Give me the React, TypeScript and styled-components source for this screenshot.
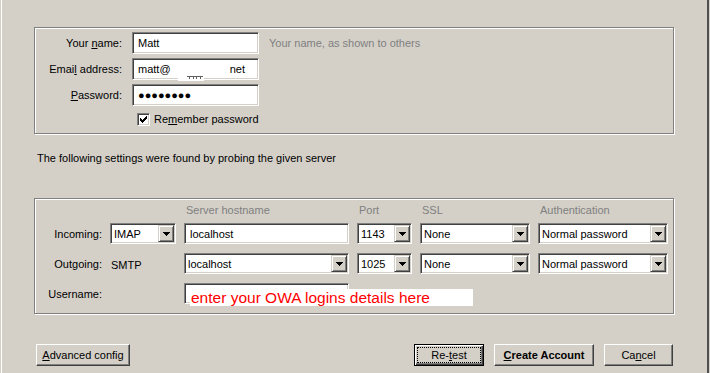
import React from "react";
import styled, { createGlobalStyle, css } from "styled-components";

const GlobalStyle = createGlobalStyle`
  html, body { margin: 0; padding: 0; background: #d4d0c8; }
  body {
    font-family: "Liberation Sans", Arial, sans-serif;
    font-size: 11px;
    color: #000;
  }
  *, *::before, *::after { box-sizing: border-box; }
`;

const Dialog = styled.div`
  position: relative;
  width: 710px;
  height: 373px;
  overflow: hidden;
  display: flex;
  flex-direction: column;
  align-items: flex-start;
  padding: 27px 0 0 34px;
  background: #d4d0c8;
  box-shadow: inset 1px 0 #d4d0c8, inset 2px 0 #fff, inset -1px 0 #d4d0c8,
    inset -3px 0 #505050;
`;

const GroupBox = styled.div<{ $height: number }>`
  position: relative;
  flex: none;
  width: 640px;
  height: ${(p) => p.$height}px;
  border: 1px solid #808080;
  box-shadow: inset 1px 1px 0 #fff, 1px 1px 0 #fff;
`;

const IdentityGrid = styled.div`
  display: grid;
  grid-template-columns: 87px 127px 1fr;
  grid-template-rows: 22px 22px 22px 18px;
  column-gap: 10px;
  row-gap: 4px;
  align-items: center;
  padding-top: 4px;
`;

const FieldLabel = styled.label`
  justify-self: end;
  white-space: nowrap;
`;

const Hint = styled.span`
  color: #808080;
  white-space: nowrap;
`;

const TextBox = styled.div<{ $width?: number }>`
  position: relative;
  display: flex;
  align-items: center;
  width: ${(p) => (p.$width ? `${p.$width}px` : "100%")};
  height: 100%;
  padding: 0 4px 0 5px;
  background: #fff;
  border: 1px solid;
  border-color: #808080 #fff #fff #808080;
  box-shadow: inset 1px 1px 0 #404040, inset -1px -1px 0 #d4d0c8;
  white-space: nowrap;
`;

const ComboBox = styled(TextBox)`
  padding: 0 1px 0 3px;
`;

const TrailingText = styled.span`
  margin-left: auto;
  padding-right: 9px;
`;

const Redaction = styled.span`
  position: absolute;
  left: 45px;
  top: 19px;
  width: 26px;
  height: 3px;
  background: #fff;
`;

const RedactionMarks = styled.svg`
  position: absolute;
  left: 54px;
  top: 17px;
`;

const PasswordDots = styled.span`
  font-size: 11px;
`;

const DropButton = styled.span`
  margin-left: auto;
  flex: none;
  width: 16px;
  height: 17px;
  display: flex;
  align-items: center;
  justify-content: center;
  background: #d4d0c8;
  border: 1px solid;
  border-color: #d4d0c8 #404040 #404040 #d4d0c8;
  box-shadow: inset 1px 1px 0 #fff, inset -1px -1px 0 #808080;
`;

const CheckRow = styled.label`
  grid-column: 2 / span 2;
  display: flex;
  align-items: center;
  gap: 4px;
  padding-left: 5px;
  white-space: nowrap;
`;

const CheckBox = styled.span`
  flex: none;
  width: 13px;
  height: 13px;
  display: flex;
  align-items: center;
  justify-content: center;
  background: #fff;
  border: 1px solid;
  border-color: #808080 #fff #fff #808080;
  box-shadow: inset 1px 1px 0 #404040, inset -1px -1px 0 #d4d0c8;
`;

const Note = styled.p`
  margin: 18px 0 33px 3px;
  line-height: 13px;
  white-space: nowrap;
`;

const ServerGrid = styled.div`
  display: grid;
  grid-template-columns: 67px 66px 165px 55px 110px 130px;
  grid-template-rows: 11px 21px 21px 21px;
  column-gap: 8px;
  row-gap: 9px;
  align-items: center;
  padding-top: 4px;
`;

const ColumnHeading = styled.span`
  color: #808080;
  padding: 4px 0 0 2px;
  line-height: 11px;
  white-space: nowrap;
`;

const PlainValue = styled.span`
  padding-left: 1px;
  padding-top: 2px;
`;

const Annotation = styled.div`
  position: absolute;
  left: 155px;
  top: 90px;
  width: 283px;
  height: 17px;
  padding-left: 1px;
  background: #fff;
  color: #ff0000;
  font-family: "Liberation Sans", Arial, sans-serif;
  font-size: 15.5px;
  line-height: 17px;
  white-space: nowrap;
`;

const ButtonBar = styled.div`
  display: flex;
  width: 639px;
  gap: 10px;
  margin-top: 30px;
  padding-left: 2px;
`;

const PushButton = styled.button<{
  $width: number;
  $primary?: boolean;
  $focused?: boolean;
  $push?: boolean;
}>`
  position: relative;
  flex: none;
  width: ${(p) => p.$width}px;
  height: 22px;
  padding: 0;
  font-family: inherit;
  font-size: 11px;
  font-weight: ${(p) => (p.$primary ? 700 : 400)};
  color: #000;
  background: #d4d0c8;
  border: 1px solid;
  border-color: #fff #404040 #404040 #fff;
  box-shadow: inset -1px -1px 0 #808080, inset 1px 1px 0 #d4d0c8;
  margin-left: ${(p) => (p.$push ? "auto" : "0")};
  ${(p) =>
    p.$focused &&
    css`
      border-color: #000;
      box-shadow: inset 1px 1px 0 #fff, inset -1px -1px 0 #404040,
        inset -2px -2px 0 #808080;
      &::after {
        content: "";
        position: absolute;
        inset: 2px;
        border: 1px dotted #000;
      }
    `}
`;

const Key = styled.u`
  text-decoration: underline;
`;

const Arrow = () => (
  <svg width="7" height="4" viewBox="0 0 7 4" shapeRendering="crispEdges">
    <rect x="0" y="0" width="7" height="1" fill="#000" />
    <rect x="1" y="1" width="5" height="1" fill="#000" />
    <rect x="2" y="2" width="3" height="1" fill="#000" />
    <rect x="3" y="3" width="1" height="1" fill="#000" />
  </svg>
);

const CheckMark = () => (
  <svg width="7" height="7" viewBox="0 0 7 7" shapeRendering="crispEdges">
    {[2, 3, 4, 3, 2, 1, 0].map((y, x) => (
      <rect key={x} x={x} y={y} width="1" height="3" fill="#000" />
    ))}
  </svg>
);

const Combo: React.FC<{ value: string; width?: number }> = ({ value, width }) => (
  <ComboBox $width={width}>
    <span>{value}</span>
    <DropButton>
      <Arrow />
    </DropButton>
  </ComboBox>
);

export default function App() {
  return (
    <>
      <GlobalStyle />
      <Dialog>
        <GroupBox $height={107}>
          <IdentityGrid>
            <FieldLabel>
              Your <Key>n</Key>ame:
            </FieldLabel>
            <TextBox>Matt</TextBox>
            <Hint>Your name, as shown to others</Hint>

            <FieldLabel>
              Emai<Key>l</Key> address:
            </FieldLabel>
            <TextBox>
              <span>matt@</span>
              <TrailingText>net</TrailingText>
              <Redaction />
              <RedactionMarks width="16" height="3" viewBox="0 0 16 3" shapeRendering="crispEdges">
                <rect x="0" y="0" width="16" height="1" fill="#606060" />
                <rect x="2" y="1" width="1" height="2" fill="#606060" />
                <rect x="6" y="1" width="1" height="2" fill="#606060" />
                <rect x="9" y="1" width="1" height="2" fill="#606060" />
                <rect x="13" y="1" width="1" height="2" fill="#606060" />
              </RedactionMarks>
            </TextBox>
            <span />

            <FieldLabel>
              <Key>P</Key>assword:
            </FieldLabel>
            <TextBox>
              <PasswordDots>●●●●●●●●</PasswordDots>
            </TextBox>
            <span />

            <CheckRow>
              <CheckBox>
                <CheckMark />
              </CheckBox>
              <span>
                Re<Key>m</Key>ember password
              </span>
            </CheckRow>
          </IdentityGrid>
        </GroupBox>

        <Note>The following settings were found by probing the given server</Note>

        <GroupBox $height={116}>
          <ServerGrid>
            <span />
            <span />
            <ColumnHeading>Server hostname</ColumnHeading>
            <ColumnHeading>Port</ColumnHeading>
            <ColumnHeading>SSL</ColumnHeading>
            <ColumnHeading>Authentication</ColumnHeading>

            <FieldLabel>Incoming:</FieldLabel>
            <Combo value="IMAP" />
            <TextBox>localhost</TextBox>
            <Combo value="1143" />
            <Combo value="None" />
            <Combo value="Normal password" />

            <FieldLabel>Outgoing:</FieldLabel>
            <PlainValue>SMTP</PlainValue>
            <Combo value="localhost" />
            <Combo value="1025" />
            <Combo value="None" />
            <Combo value="Normal password" />

            <FieldLabel>Username:</FieldLabel>
            <span />
            <TextBox />
          </ServerGrid>
          <Annotation>enter your OWA logins details here</Annotation>
        </GroupBox>

        <ButtonBar>
          <PushButton $width={94}>
            <Key>A</Key>dvanced config
          </PushButton>
          <PushButton $width={70} $focused $push>
            Re-<Key>t</Key>est
          </PushButton>
          <PushButton $width={100} $primary>
            <Key>C</Key>reate Account
          </PushButton>
          <PushButton $width={69}>
            Ca<Key>n</Key>cel
          </PushButton>
        </ButtonBar>
      </Dialog>
    </>
  );
}
